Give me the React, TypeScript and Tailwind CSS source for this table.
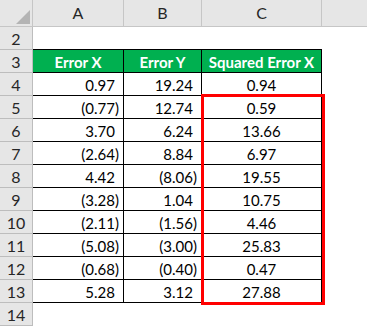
import React from "react";

const rows: [string, string, string][] = [
  ["0.97", "19.24", "0.94"],
  ["(0.77)", "12.74", "0.59"],
  ["3.70", "6.24", "13.66"],
  ["(2.64)", "8.84", "6.97"],
  ["4.42", "(8.06)", "19.55"],
  ["(3.28)", "1.04", "10.75"],
  ["(2.11)", "(1.56)", "4.46"],
  ["(5.08)", "(3.00)", "25.83"],
  ["(0.68)", "(0.40)", "0.47"],
  ["5.28", "3.12", "27.88"],
];

function Num({ v }: { v: string }) {
  const neg = v.startsWith("(");
  return (
    <span>
      {v}
      {!neg && <span className="invisible">)</span>}
    </span>
  );
}

const hdr = "bg-[#e6e6e6] border-r border-b border-[#c6c6c6] flex items-center justify-center text-[#262626] text-[16px]";
const rowHdr = "bg-[#e6e6e6] border-r border-b border-[#bdbdbd] flex items-center justify-center text-[#262626] text-[16px] pt-[1px]";

export default function App() {
  return (
    <div
      className="relative w-[367px] h-[327px] bg-white overflow-hidden text-[15px] leading-none"
      style={{ fontFamily: "Lato, 'Open Sans', sans-serif" }}
    >
      <div className="grid grid-cols-[33px_91px_78px_120px_1fr] grid-rows-[27px_repeat(13,23px)]">
        {/* column header row */}
        <div className="bg-[#e6e6e6] border-r border-b border-[#c6c6c6] relative">
          <svg width="33" height="27" className="absolute left-0 top-0">
            <polygon points="16,24 30,24 30,10" fill="#b4b4b4" />
          </svg>
        </div>
        <div className={hdr}>A</div>
        <div className={hdr}>B</div>
        <div className={hdr}>C</div>
        <div className="bg-[#e6e6e6] border-b border-[#c6c6c6]"></div>

        {/* row 2 */}
        <div className={rowHdr}>2</div>
        <div className="border-b border-black"></div>
        <div className="border-b border-black"></div>
        <div className="border-b border-black"></div>
        <div></div>

        {/* row 3 */}
        <div className={rowHdr}>3</div>
        <div className="bg-[#00b050] border-r border-b border-black flex items-center justify-center text-white font-bold pt-[2px]">Error X</div>
        <div className="bg-[#00b050] border-r border-b border-black flex items-center justify-center text-white font-bold pt-[2px]">Error Y</div>
        <div className="bg-[#00b050] border-r border-b border-black flex items-center justify-center text-white font-bold pt-[2px]">Squared Error X</div>
        <div></div>

        {rows.map((r, i) => (
          <React.Fragment key={i}>
            <div className={rowHdr}>{i + 4}</div>
            <div className="border-r border-b border-black flex items-center justify-end pr-[4px] pt-[2px] text-black">
              <Num v={r[0]} />
            </div>
            <div className="border-r border-b border-black flex items-center justify-end pr-[4px] pt-[2px] text-black">
              <Num v={r[1]} />
            </div>
            <div className="border-r border-b border-black flex items-center justify-center pt-[2px] text-black">
              {r[2]}
            </div>
            <div></div>
          </React.Fragment>
        ))}

        <div className={rowHdr}>14</div>
        <div></div>
        <div></div>
        <div></div>
        <div></div>
      </div>

      <div className="absolute left-[201px] top-[94px] w-[124px] h-[211px] border-[3px] border-[#ff0000]"></div>
    </div>
  );
}
